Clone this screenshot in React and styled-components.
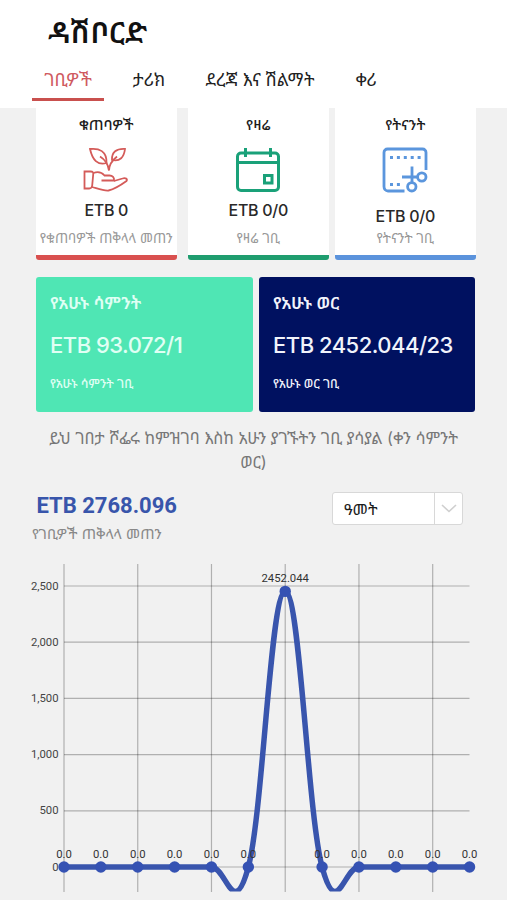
import styled, { createGlobalStyle } from 'styled-components';

const stats = [
  {
    title: 'ቁጠባዎች',
    value: 'ETB 0',
    label: 'የቁጠባዎች ጠቅላላ መጠን',
    color: '#d9504f',
    icon: <SavingsIcon />,
  },
  {
    title: 'የዛሬ',
    value: 'ETB 0/0',
    label: 'የዛሬ ገቢ',
    color: '#1f9d6f',
    icon: <CalendarIcon />,
  },
  {
    title: 'የትናንት',
    value: 'ETB 0/0',
    label: 'የትናንት ገቢ',
    color: '#5b93dc',
    icon: <CutIcon />,
    low: true,
  },
];

const earnings = [0, 0, 0, 0, 0, 0, 2452.044, 0, 0, 0, 0, 0];

export default function App() {
  return (
    <>
      <GlobalStyle />
      <Header>
        <Title>ዳሽቦርድ</Title>
        <Tabs>
          <Tab $active $width={72}>
            ገቢዎች
          </Tab>
          <Tab $width={90}>ታሪክ</Tab>
          <Tab $width={132}>ደረጃ እና ሽልማት</Tab>
          <Tab $width={80}>ቀሪ</Tab>
        </Tabs>
      </Header>
      <Main>
        <StatRow>
          {stats.map((stat) => (
            <StatCard key={stat.title} $color={stat.color}>
              <StatTitle>{stat.title}</StatTitle>
              {stat.icon}
              <StatValue $low={stat.low}>{stat.value}</StatValue>
              <StatLabel>{stat.label}</StatLabel>
            </StatCard>
          ))}
        </StatRow>
        <PeriodRow>
          <PeriodCard $background="#4fe6b4" $color="#e0fff4">
            <h2>የአሁኑ ሳምንት</h2>
            <strong>ETB 93.072/1</strong>
            <small>የአሁኑ ሳምንት ገቢ</small>
          </PeriodCard>
          <PeriodCard $background="#001160" $color="#f1f3fb">
            <h2>የአሁኑ ወር</h2>
            <strong>ETB 2452.044/23</strong>
            <small>የአሁኑ ወር ገቢ</small>
          </PeriodCard>
        </PeriodRow>
        <Note>
          ይህ ገበታ ሾፌሩ ከምዝገባ እስከ አሁን ያገኙትን ገቢ ያሳያል (ቀን ሳምንት
          <br />
          ወር)
        </Note>
        <Summary>
          <div>
            <Total>ETB 2768.096</Total>
            <TotalLabel>የገቢዎች ጠቅላላ መጠን</TotalLabel>
          </div>
          <Select>
            <span>ዓመት</span>
            <SelectArrow>
              <svg width="16" height="9" viewBox="0 0 16 9">
                <path d="M1 1l7 6.5L15 1" fill="none" stroke="#cfcfcf" strokeWidth="1.6" />
              </svg>
            </SelectArrow>
          </Select>
        </Summary>
        <EarningsChart data={earnings} />
      </Main>
    </>
  );
}

function SavingsIcon() {
  return (
    <Icon viewBox="0 0 46 46" stroke="#d45b59" strokeWidth="1.8">
      <path d="M1.500 24.500h6c2.500 0 3 1 2.700 3l-1 11c-.2 2-1 3-3 3H1.500z" />
      <path d="M10.500 26c5-2 8-1 11 2.500h5c3 0 5 2 4.500 5H18.500" />
      <path d="M31 34l8.500-2.500c3-1 5.500.5 4 2.500-5.500 4-11.500 8-18 9.500-5 .5-11-2-16.500-3.500" />
      <path d="M7 2c9-1 17 2 16.500 14-9 2.500-14-3-16.500-14z" />
      <path d="M42 2c-8.500-.5-13.500 3-13 11 8 2 12-3 13-11z" />
      <path d="M17 9.500c5 3 8 7 9 14 0-6 3-10 8-14" />
    </Icon>
  );
}

function CalendarIcon() {
  return (
    <Icon viewBox="0 0 46 46" stroke="#1aa179" strokeWidth="3">
      <rect x="2.500" y="6" width="41" height="37.500" rx="3.500" />
      <path d="M2.500 15.500h41M10.500 1v9M35.500 1v9" />
      <rect x="29.500" y="28.500" width="7.500" height="7.500" />
    </Icon>
  );
}

function CutIcon() {
  return (
    <Icon viewBox="0 0 46 46" stroke="#5b96dd" strokeWidth="2.8">
      <path d="M44 23V5.500c0-2-1.500-3.500-3.500-3.500h-35C3.500 2 2 3.500 2 5.500v34C2 42 3.500 44 6 44h16.500" />
      <path d="M8 10.500h31M8 37.500h10" strokeWidth="3" strokeDasharray="3 3.900" />
      <path d="M30 19.500v15.500M20 30h15" strokeWidth="2.800" />
      <circle cx="39.800" cy="30" r="4.200" />
      <circle cx="29.800" cy="39.800" r="4.200" />
    </Icon>
  );
}

function EarningsChart({ data }) {
  const left = 64;
  const step = 36.87;
  const zero = 308;
  const unit = 0.1124;
  const points = data.map((value, i) => [left + i * step, zero - value * unit]);
  const at = (i) => points[Math.max(0, Math.min(points.length - 1, i))];

  // every control point follows the slope between its two neighbours
  const line = points.slice(1).reduce((path, [x, y], i) => {
    const [x0, y0] = points[i];
    const c1 = [x0 + (x - at(i - 1)[0]) * 0.2, y0 + (y - at(i - 1)[1]) * 0.2];
    const c2 = [x - (at(i + 2)[0] - x0) * 0.2, y - (at(i + 2)[1] - y0) * 0.2];
    return `${path} C${c1} ${c2} ${x},${y}`;
  }, `M${points[0]}`);

  return (
    <Chart viewBox="0 0 507 341">
      <clipPath id="plot">
        <rect x="50" y="5" width="430" height="327.500" />
      </clipPath>
      <g stroke="#000" strokeOpacity=".27" strokeWidth="1.2">
        {[0, 500, 1000, 1500, 2000, 2500].map((tick) => (
          <line key={tick} x1={left} x2="469.500" y1={zero - tick * unit} y2={zero - tick * unit} />
        ))}
        {[0, 2, 4, 6, 8, 10].map((i) => (
          <line key={i} x1={points[i][0]} x2={points[i][0]} y1="5" y2="333" />
        ))}
      </g>
      {[0, 500, 1000, 1500, 2000, 2500].map((tick) => (
        <AxisLabel key={tick} x="58.500" y={zero + 3.500 - tick * unit}>
          {tick.toLocaleString('en-US')}
        </AxisLabel>
      ))}
      <g clipPath="url(#plot)">
        <path d={line} fill="none" stroke="#3955ad" strokeWidth="5.500" />
      </g>
      {points.map(([x, y], i) => (
        <g key={i}>
          <circle cx={x} cy={y} r="5.700" fill="#3552b3" />
          <PointLabel x={x} y={y - 9.500}>
            {data[i] ? data[i] : '0.0'}
          </PointLabel>
        </g>
      ))}
    </Chart>
  );
}

const GlobalStyle = createGlobalStyle`
  * {
    box-sizing: border-box;
  }
  body {
    background-color: #f1f1f1;
    color: #1c1c1c;
    font-family: Inter, "Noto Sans", "Noto Sans Ethiopic", sans-serif;
    height: 900px;
    margin: 0;
    overflow: hidden;
    width: 507px;
  }
  h1, h2, p {
    margin: 0;
  }
`;

const Header = styled.header`
  background-color: #fff;
  height: 108px;
  padding-top: 12px;
`;

const Title = styled.h1`
  color: #111;
  font-size: 29.5px;
  font-weight: 600;
  line-height: 40px;
  padding-left: 48px;
`;

const Tabs = styled.nav`
  display: flex;
  padding: 10px 0 0 32px;
`;

const Tab = styled.div`
  border-bottom: 3px solid ${({ $active }) => ($active ? '#c9504e' : 'transparent')};
  color: ${({ $active }) => ($active ? '#cf5a60' : '#222')};
  flex: 0 0 ${({ $width }) => $width}px;
  font-size: ${({ $active }) => ($active ? 18 : 17.6)}px;
  height: 39px;
  line-height: 36px;
  text-align: center;
  white-space: nowrap;
`;

const Main = styled.main`
  height: 792px;
`;

const StatRow = styled.section`
  display: grid;
  grid-template-columns: 152px 147px 140px;
  padding-left: 36px;
`;

const StatCard = styled.article`
  align-items: center;
  background-color: #fff;
  border-bottom: 5px solid ${({ $color }) => $color};
  border-radius: 0 0 3px 3px;
  display: flex;
  flex-direction: column;
  height: 152px;
  padding-top: 5px;
  white-space: nowrap;
  width: 140.5px;
`;

const StatTitle = styled.h2`
  font-size: 14.7px;
  font-weight: 500;
  height: 34px;
  line-height: 24px;
`;

const Icon = styled.svg`
  fill: none;
  flex: none;
  height: 46px;
  width: 46px;
`;

const StatValue = styled.div`
  color: #292929;
  font-size: 16px;
  font-weight: 500;
  height: 34px;
  letter-spacing: -0.3px;
  line-height: 34px;
  padding-top: ${({ $low }) => ($low ? 6 : 0)}px;
`;

const StatLabel = styled.div`
  color: #999;
  font-size: 13.5px;
  line-height: 22px;
`;

const PeriodRow = styled.section`
  display: grid;
  gap: 6px;
  grid-template-columns: 217px 216px;
  padding: 17px 32px 0 36px;
`;

const PeriodCard = styled.article`
  background-color: ${({ $background }) => $background};
  border-radius: 3px;
  color: ${({ $color }) => $color};
  display: flex;
  flex-direction: column;
  height: 135px;
  padding: 12px 14px 0;
  white-space: nowrap;
  h2 {
    font-size: 17.2px;
    font-weight: 600;
    line-height: 28px;
  }
  strong {
    font-size: 22px;
    font-weight: 500;
    letter-spacing: -0.5px;
    line-height: 56px;
  }
  small {
    font-size: 12.3px;
    font-weight: 500;
    line-height: 21px;
  }
`;

const Note = styled.p`
  color: #777;
  font-size: 16.35px;
  line-height: 24px;
  margin-top: 14px;
  text-align: center;
  white-space: nowrap;
`;

const Summary = styled.section`
  display: flex;
  height: 85px;
  justify-content: space-between;
  padding: 18px 44px 0 32px;
`;

const Total = styled.div`
  color: #3855ab;
  font-family: Roboto, sans-serif;
  font-size: 22px;
  font-weight: 700;
  line-height: 28px;
  padding-left: 4.5px;
`;

const TotalLabel = styled.div`
  color: #888;
  font-size: 14.7px;
  line-height: 29px;
`;

const Select = styled.div`
  background-color: #fff;
  border: 1px solid #d8d8d8;
  border-radius: 3px;
  display: flex;
  font-size: 16px;
  height: 33px;
  justify-content: space-between;
  line-height: 32px;
  padding-left: 11px;
  width: 131px;
`;

const SelectArrow = styled.div`
  align-items: center;
  border-left: 1px solid #d8d8d8;
  display: flex;
  justify-content: center;
  width: 28px;
`;

const Chart = styled.svg`
  display: block;
  height: 341px;
  width: 507px;
`;

const AxisLabel = styled.text`
  fill: #444;
  font-family: Roboto, sans-serif;
  font-size: 11.3px;
  text-anchor: end;
`;

const PointLabel = styled.text`
  fill: #333;
  font-family: Roboto, sans-serif;
  font-size: 11.3px;
  text-anchor: middle;
`;
